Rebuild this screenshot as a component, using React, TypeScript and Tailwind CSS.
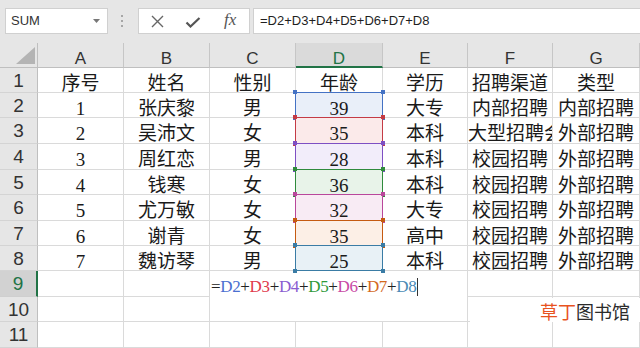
import React from 'react';

const GRID = 'border-r border-b border-[#dadada]';
const TEXT =
  "whitespace-nowrap text-center pt-[6px] leading-[20px] text-[19px] text-[#1a1a1a] font-['Liberation_Serif','Noto_Sans_CJK_SC',serif]";

const data: string[][] = [
  ['序号', '姓名', '性别', '年龄', '学历', '招聘渠道', '类型'],
  ['1', '张庆黎', '男', '39', '大专', '内部招聘', '内部招聘'],
  ['2', '吴沛文', '女', '35', '本科', '大型招聘会', '外部招聘'],
  ['3', '周红恋', '男', '28', '本科', '校园招聘', '外部招聘'],
  ['4', '钱寒', '女', '36', '本科', '校园招聘', '外部招聘'],
  ['5', '尤万敏', '女', '32', '大专', '校园招聘', '外部招聘'],
  ['6', '谢青', '女', '35', '高中', '校园招聘', '外部招聘'],
  ['7', '魏访琴', '男', '25', '本科', '校园招聘', '外部招聘'],
];

// formula reference colours for D2..D8
const refs = [
  { ref: 'D2', text: 'text-[#4a6fd0]', border: 'border-[#4472c4]', bg: 'bg-[#e9eff9]', dot: 'bg-[#4472c4]' },
  { ref: 'D3', text: 'text-[#e0394c]', border: 'border-[#c43b45]', bg: 'bg-[#fbeaea]', dot: 'bg-[#c43b45]' },
  { ref: 'D4', text: 'text-[#8a5cd0]', border: 'border-[#7e4fc3]', bg: 'bg-[#f2edfa]', dot: 'bg-[#7e4fc3]' },
  { ref: 'D5', text: 'text-[#2f9a3a]', border: 'border-[#2f8a3c]', bg: 'bg-[#e8f3e9]', dot: 'bg-[#2f8a3c]' },
  { ref: 'D6', text: 'text-[#c84aa5]', border: 'border-[#b9479b]', bg: 'bg-[#f8ebf4]', dot: 'bg-[#b9479b]' },
  { ref: 'D7', text: 'text-[#d46a1e]', border: 'border-[#c55a11]', bg: 'bg-[#fcefe6]', dot: 'bg-[#c55a11]' },
  { ref: 'D8', text: 'text-[#4a8ab5]', border: 'border-[#3a7ca5]', bg: 'bg-[#e8f1f6]', dot: 'bg-[#3a7ca5]' },
];

const RowHead = ({ n, active }: { n: number; active?: boolean }) => (
  <div
    className={
      active
        ? "bg-[#d2d2d2] border-b border-b-[#cfcfcf] border-r-2 border-r-[#217346] text-[#217346] text-center pt-[3px] leading-[20px] text-[19px] font-['Liberation_Sans',sans-serif]"
        : "bg-[#e6e6e6] border-b border-b-[#d4d4d4] border-r border-r-[#bfbfbf] text-[#333] text-center pt-[3px] leading-[20px] text-[19px] font-['Liberation_Sans',sans-serif]"
    }
  >
    {n}
  </div>
);

const RefCell = ({ v, i }: { v: string; i: number }) => {
  const r = refs[i];
  return (
    <div className={`relative ${GRID} ${TEXT} ${r.bg}`}>
      {v}
      <div className={`absolute -top-px -left-px -right-px -bottom-px border ${r.border}`}>
        <span className={`absolute -top-[3px] -left-[3px] w-[4px] h-[4px] ${r.dot}`} />
        <span className={`absolute -top-[3px] -right-[3px] w-[4px] h-[4px] ${r.dot}`} />
        <span className={`absolute -bottom-[3px] -left-[3px] w-[4px] h-[4px] ${r.dot}`} />
        <span className={`absolute -bottom-[3px] -right-[3px] w-[4px] h-[4px] ${r.dot}`} />
      </div>
    </div>
  );
};

const Toolbar = () => (
  <div className="h-[43px] bg-[#e6e6e6] flex items-start pt-[8px] font-['Liberation_Sans',sans-serif]">
    <div className="ml-[5px] w-[103px] h-[26px] bg-white border border-[#d0d0d0] flex items-center pl-[5px] pr-[7px] text-[13px] text-[#333]">
      <span className="flex-1">SUM</span>
      <svg width="7" height="4" viewBox="0 0 7 4">
        <path d="M0 0h7L3.5 4z" fill="#777" />
      </svg>
    </div>
    <div className="ml-[13px] h-[26px] flex flex-col justify-center gap-[3px]">
      <span className="w-[2px] h-[2px] bg-[#a6a6a6]" />
      <span className="w-[2px] h-[2px] bg-[#a6a6a6]" />
      <span className="w-[2px] h-[2px] bg-[#a6a6a6]" />
    </div>
    <div className="ml-[15px] w-[112px] h-[26px] bg-white border border-[#d0d0d0] flex items-center">
      <svg className="ml-[12px]" width="13" height="13" viewBox="0 0 13 13">
        <path d="M1 1l11 11M12 1L1 12" stroke="#666" strokeWidth="1.4" />
      </svg>
      <svg className="ml-[21px] mt-[3px]" width="16" height="11" viewBox="0 0 16 11">
        <path d="M1.5 5.5l4 4L14.5 1" stroke="#555" strokeWidth="2.2" fill="none" />
      </svg>
      <span className="ml-[23px] mt-[-2px] italic text-[17px] text-[#555] font-['Liberation_Serif',serif]">fx</span>
    </div>
    <div className="ml-[3px] flex-1 h-[26px] bg-white border-y border-l border-[#d0d0d0] flex items-center pl-[6px] text-[13px] text-[#1f1f1f]">
      =D2+D3+D4+D5+D6+D7+D8
    </div>
  </div>
);

export default function App() {
  const letters = ['A', 'B', 'C', 'D', 'E', 'F', 'G'];
  return (
    <div className="relative w-[640px] h-[348px] overflow-hidden bg-white">
      <Toolbar />
      <div className="grid grid-cols-[38px_86px_86px_86px_87px_85px_85px_87px] grid-rows-[25px_25px_25px_26px_26px_25px_26px_25px_25px_26px_25px_26px]">
        {/* corner */}
        <div className="bg-[#e6e6e6] border-r border-b border-[#bfbfbf] flex items-end justify-end pr-[2px] pb-[3px]">
          <svg width="19" height="17" viewBox="0 0 19 17">
            <path d="M19 0V17H0z" fill="#b4b4b4" />
          </svg>
        </div>
        {letters.map((l) =>
          l === 'D' ? (
            <div
              key={l}
              className="bg-[#dadada] border-r border-r-[#c6c6c6] border-b-2 border-b-[#217346] text-[#217346] text-center pt-[6px] leading-[20px] text-[17px] font-['Liberation_Sans',sans-serif]"
            >
              {l}
            </div>
          ) : (
            <div
              key={l}
              className="bg-[#e6e6e6] border-r border-r-[#c6c6c6] border-b border-b-[#bfbfbf] text-[#333] text-center pt-[6px] leading-[20px] text-[17px] font-['Liberation_Sans',sans-serif]"
            >
              {l}
            </div>
          )
        )}

        {data.map((row, ri) => (
          <React.Fragment key={ri}>
            <RowHead n={ri + 1} />
            {row.map((v, ci) =>
              ci === 3 && ri > 0 ? (
                <RefCell key={ci} v={v} i={ri - 1} />
              ) : (
                <div key={ci} className={`overflow-hidden ${GRID} ${TEXT}`}>
                  {v}
                </div>
              )
            )}
          </React.Fragment>
        ))}

        {/* row 9: cell in edit mode spanning C9:E10 */}
        <RowHead n={9} active />
        <div className={GRID} />
        <div className={GRID} />
        <div className="col-start-4 col-span-3 row-start-10 row-span-2 bg-white border-r border-b border-[#dadada] pl-[1px] pt-[6px] leading-[20px] text-[17px] tracking-[-0.35px] whitespace-nowrap text-[#222] font-['Liberation_Serif',serif]">
          =
          {refs.map((r, i) => (
            <React.Fragment key={r.ref}>
              {i > 0 && '+'}
              <span className={r.text}>{r.ref}</span>
            </React.Fragment>
          ))}
          <span className="inline-block w-px h-[18px] bg-[#333] align-[-4px] ml-[1px]" />
        </div>
        <div className={GRID} />
        <div className={GRID} />

        {/* row 10 */}
        <RowHead n={10} />
        <div className={GRID} />
        <div className={GRID} />
        <div className={GRID} />
        <div className={GRID} />

        {/* row 11 */}
        <RowHead n={11} />
        {letters.map((l) => (
          <div key={l} className={GRID} />
        ))}
      </div>

      {/* watermark */}
      <div className="absolute left-[470px] top-[298px] w-[170px] h-[24px] bg-white text-right pr-[10px] pt-[4px] leading-[18px] text-[18px] font-['Noto_Sans_CJK_SC',sans-serif]">
        <span className="text-[#e8531f]">草丁</span>
        <span className="text-[#2b2b2b]">图书馆</span>
      </div>
    </div>
  );
}
